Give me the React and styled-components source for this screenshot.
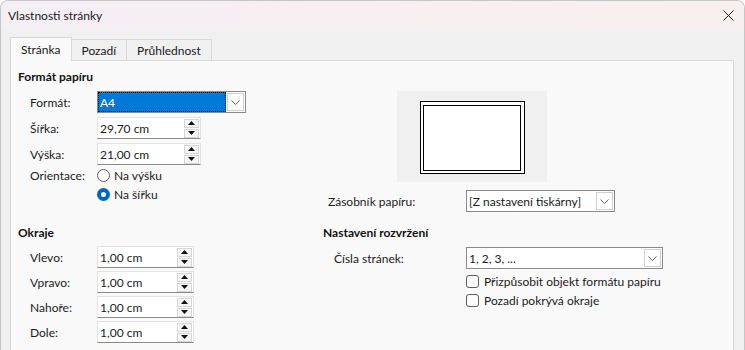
import React from "react";
import styled, { createGlobalStyle } from "styled-components";

const GlobalStyle = createGlobalStyle`
  html, body {
    margin: 0;
    padding: 0;
    background: #ffffff;
  }
  body {
    font-family: Lato, "Liberation Sans", sans-serif;
    font-size: 12px;
    color: #1b1b1b;
  }
  * {
    box-sizing: border-box;
  }
`;

const Window = styled.div`
  width: 745px;
  height: 350px;
  display: flex;
  flex-direction: column;
  overflow: hidden;
  background: #f0f0f0;
  border: 1px solid #c6c6c6;
  border-bottom: none;
  border-radius: 8px 8px 0 0;
`;

const TitleBar = styled.div`
  height: 28px;
  flex-shrink: 0;
  display: flex;
  align-items: center;
  justify-content: space-between;
  padding: 0 6px 0 7px;
  background: linear-gradient(90deg, #f4eff5 0%, #f8f0ee 100%);
`;

const Title = styled.span`
  font-size: 12px;
  color: #1a1a1a;
`;

const Close = styled.button`
  width: 20px;
  height: 20px;
  padding: 0;
  border: none;
  background: transparent;
  display: flex;
  align-items: center;
  justify-content: center;
`;

const Body = styled.div`
  flex: 1;
  min-height: 0;
  display: flex;
  flex-direction: column;
  padding: 9px 10px 0 9px;
`;

const TabBar = styled.div`
  display: flex;
  align-items: flex-end;
  height: 23px;
  margin-bottom: -1px;
  position: relative;
  z-index: 1;
`;

const Tab = styled.div`
  height: ${(p) => (p.$active ? "24px" : "22px")};
  padding: 0 10px;
  display: flex;
  align-items: center;
  border: 1px solid #d9d9d9;
  border-bottom: ${(p) => (p.$active ? "none" : "1px solid #d9d9d9")};
  margin-left: ${(p) => (p.$first ? "0" : "-1px")};
  background: ${(p) => (p.$active ? "#f9f9f9" : "#f0f0f0")};
  color: #1a1a1a;
  padding-top: ${(p) => (p.$active ? "0" : "1px")};
`;

const Panel = styled.div`
  flex: 1;
  width: 724px;
  background: #f9f9f9;
  border: 1px solid #d9d9d9;
  border-bottom: none;
  display: grid;
  grid-template-columns: 305px 1fr;
  padding-left: 7px;
`;

const Column = styled.div`
  display: flex;
  flex-direction: column;
`;

const Heading = styled.div`
  height: 16px;
  line-height: 16px;
  margin-top: ${(p) => p.$mt}px;
  font-weight: 700;
  color: #111;
`;

const Row = styled.div`
  display: flex;
  align-items: center;
  height: ${(p) => p.$h || 22}px;
  margin-top: ${(p) => p.$mt || 0}px;
  padding-left: ${(p) => p.$indent || 0}px;
`;

const Label = styled.span`
  width: ${(p) => p.$w}px;
  flex-shrink: 0;
`;

/* combo box */
const Combo = styled.div`
  width: ${(p) => p.$w}px;
  height: 22px;
  display: flex;
  background: #fff;
  border: 1px solid #8a8a8a;
`;

const ComboText = styled.div`
  flex: 1;
  display: flex;
  align-items: center;
  padding-left: 2px;
  color: ${(p) => (p.$selected ? "#fff" : "#1a1a1a")};
  background: ${(p) => (p.$selected ? "#0078d7" : "#fff")};
  outline: ${(p) => (p.$selected ? "1px dotted #000" : "none")};
  outline-offset: -1px;
`;

const ComboButton = styled.div`
  width: 17px;
  margin: 1px;
  border: 1px solid #cfcfcf;
  background: #fff;
  display: flex;
  align-items: center;
  justify-content: center;
`;

const Chevron = () => (
  <svg width="9" height="5" viewBox="0 0 9 5">
    <path d="M0.5 0.5 L4.5 4.5 L8.5 0.5" fill="none" stroke="#606060" strokeWidth="1" />
  </svg>
);

const ComboBox = ({ width, value, selected }) => (
  <Combo $w={width}>
    <ComboText $selected={selected}>{value}</ComboText>
    <ComboButton>
      <Chevron />
    </ComboButton>
  </Combo>
);

/* spin field */
const Spin = styled.div`
  width: ${(p) => p.$w}px;
  height: 22px;
  display: flex;
  align-items: center;
  background: #fff;
  border: 1px solid #e3e3e3;
  border-bottom: 1px solid #8a8a8a;
`;

const SpinText = styled.span`
  flex: 1;
  padding-left: 2px;
`;

const SpinButtons = styled.div`
  display: flex;
  flex-direction: column;
  gap: 1px;
  margin-right: 1px;
`;

const SpinBtn = styled.div`
  width: 15px;
  height: 9px;
  border: 1px solid #d6d6d6;
  background: #f6f6f6;
  display: flex;
  align-items: center;
  justify-content: center;
`;

const Tri = ({ down }) => (
  <svg width="7" height="4" viewBox="0 0 7 4">
    <path d={down ? "M0 0 L7 0 L3.5 4 Z" : "M0 4 L7 4 L3.5 0 Z"} fill="#111" />
  </svg>
);

const SpinField = ({ width, value }) => (
  <Spin $w={width}>
    <SpinText>{value}</SpinText>
    <SpinButtons>
      <SpinBtn>
        <Tri />
      </SpinBtn>
      <SpinBtn>
        <Tri down />
      </SpinBtn>
    </SpinButtons>
  </Spin>
);

/* radio & checkbox */
const Radio = styled.span`
  width: 13px;
  height: 13px;
  border-radius: 50%;
  flex-shrink: 0;
  margin-right: 4px;
  border: ${(p) => (p.$checked ? "none" : "1px solid #5d5d5d")};
  background: ${(p) => (p.$checked ? "#0067c0" : "#fff")};
  display: flex;
  align-items: center;
  justify-content: center;
  &::after {
    content: "";
    display: ${(p) => (p.$checked ? "block" : "none")};
    width: 5px;
    height: 5px;
    border-radius: 50%;
    background: #fff;
  }
`;

const Check = styled.span`
  width: 13px;
  height: 13px;
  flex-shrink: 0;
  margin-right: 5px;
  border: 1px solid #5d5d5d;
  border-radius: 3px;
  background: #fbfbfb;
`;

/* page preview */
const Preview = styled.div`
  width: 150px;
  height: 91px;
  margin: 30px 0 0 74px;
  background: #f0f0f0;
  display: flex;
  align-items: center;
  justify-content: center;
`;

const Paper = styled.div`
  width: 105px;
  height: 73px;
  margin-top: 2px;
  border: 1.5px solid #000;
  padding: 2.5px;
  background: #fff;
`;

const PaperMargin = styled.div`
  width: 100%;
  height: 100%;
  border: 1.5px solid #000;
`;

const CloseIcon = () => (
  <svg width="11" height="11" viewBox="0 0 11 11">
    <path d="M0.5 0.5 L10.5 10.5 M10.5 0.5 L0.5 10.5" stroke="#1a1a1a" strokeWidth="1" />
  </svg>
);

const margins = ["Vlevo:", "Vpravo:", "Nahoře:", "Dole:"];

export default function App() {
  return (
    <>
      <GlobalStyle />
      <Window>
        <TitleBar>
          <Title>Vlastnosti stránky</Title>
          <Close>
            <CloseIcon />
          </Close>
        </TitleBar>
        <Body>
          <TabBar>
            <Tab $active $first>Stránka</Tab>
            <Tab>Pozadí</Tab>
            <Tab>Průhlednost</Tab>
          </TabBar>
          <Panel>
            <Column>
              <Heading $mt={8}>Formát papíru</Heading>
              <Row $mt={6} $indent={12}>
                <Label $w={67}>Formát:</Label>
                <ComboBox width={149} value="A4" selected />
              </Row>
              <Row $mt={4} $indent={12}>
                <Label $w={67}>Šířka:</Label>
                <SpinField width={104} value="29,70 cm" />
              </Row>
              <Row $mt={4} $indent={12}>
                <Label $w={67}>Výška:</Label>
                <SpinField width={104} value="21,00 cm" />
              </Row>
              <Row $h={20} $indent={12}>
                <Label $w={67}>Orientace:</Label>
                <Radio />
                Na výšku
              </Row>
              <Row $h={19} $indent={79}>
                <Radio $checked />
                Na šířku
              </Row>

              <Heading $mt={21}>Okraje</Heading>
              {margins.map((m, i) => (
                <Row key={m} $mt={i === 0 ? 5 : 3} $indent={12}>
                  <Label $w={67}>{m}</Label>
                  <SpinField width={97} value="1,00 cm" />
                </Row>
              ))}
            </Column>

            <Column>
              <Preview>
                <Paper>
                  <PaperMargin />
                </Paper>
              </Preview>
              <Row $mt={8} $indent={5}>
                <Label $w={138}>Zásobník papíru:</Label>
                <ComboBox width={149} value="[Z nastavení tiskárny]" />
              </Row>
              <Heading $mt={13}>Nastavení rozvržení</Heading>
              <Row $mt={6} $indent={11}>
                <Label $w={132}>Čísla stránek:</Label>
                <ComboBox width={197} value="1, 2, 3, ..." />
              </Row>
              <Row $h={19} $mt={3} $indent={143}>
                <Check />
                Přizpůsobit objekt formátu papíru
              </Row>
              <Row $h={19} $indent={143}>
                <Check />
                Pozadí pokrývá okraje
              </Row>
            </Column>
          </Panel>
        </Body>
      </Window>
    </>
  );
}
